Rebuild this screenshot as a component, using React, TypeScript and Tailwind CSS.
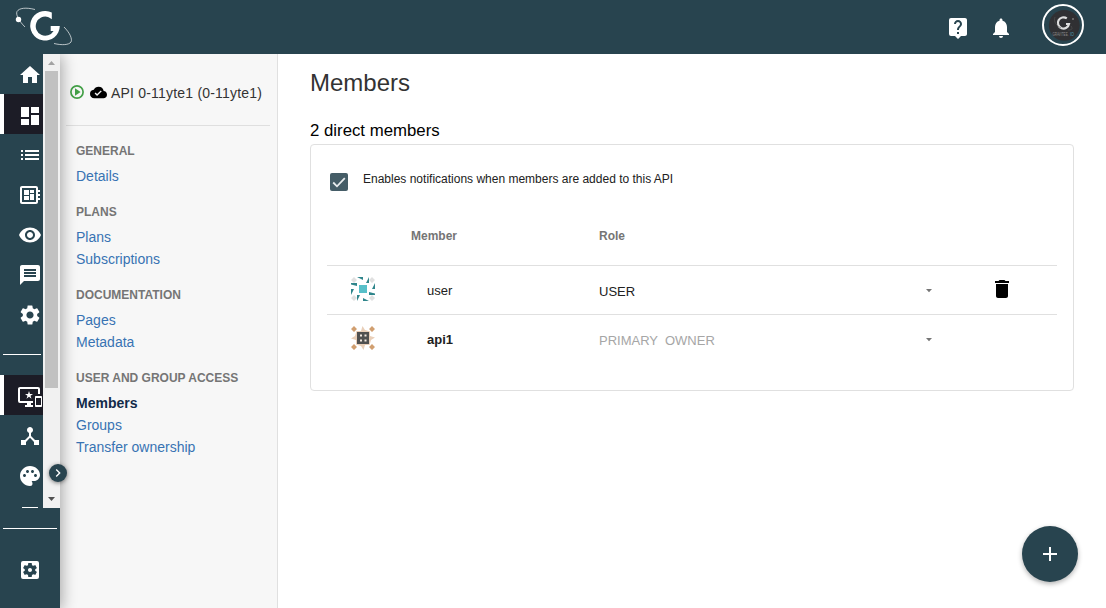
import type { ReactNode } from "react";
import type { IconType } from "react-icons";
import {
  MdAdd,
  MdChevronRight,
  MdCloudDone,
  MdDashboard,
  MdDelete,
  MdDeveloperBoard,
  MdDeviceHub,
  MdHome,
  MdImportantDevices,
  MdList,
  MdLiveHelp,
  MdMessage,
  MdNotifications,
  MdPalette,
  MdSettings,
  MdSettingsApplications,
  MdVisibility,
} from "react-icons/md";

const menu: { title: string; items: string[] }[] = [
  { title: "GENERAL", items: ["Details"] },
  { title: "PLANS", items: ["Plans", "Subscriptions"] },
  { title: "DOCUMENTATION", items: ["Pages", "Metadata"] },
  { title: "USER AND GROUP ACCESS", items: ["Members", "Groups", "Transfer ownership"] },
];

function Logo() {
  return (
    <svg width="58" height="40" viewBox="0 0 58 40" fill="none">
      <path d="M20 2.500C11 .2 4 1 2 4.500c-1.500 3 2 9.500 8 15.500" stroke="#fff" strokeWidth=".8" opacity=".85" />
      <circle cx="3.500" cy="12.500" r="2.700" fill="#fff" />
      <path d="M49 20c6 6 8.500 12 7 15-2 3-9 3.400-17 1.500" stroke="#fff" strokeWidth=".8" opacity=".85" />
      <path
        d="M36.800 5.600A14.800 14.800 0 1 0 44.800 19H35.700v5H38.600A9.600 9.600 0 1 1 33 9.900Q35 10.600 36.800 12.200Z"
        fill="#fff"
      />
    </svg>
  );
}

function Avatar() {
  return (
    <svg width="42" height="42" viewBox="0 0 42 42">
      <circle cx="21" cy="21" r="20" fill="#28444f" stroke="#fff" strokeWidth="2" />
      <circle cx="22.300" cy="21.300" r="15.400" fill="#303033" />
      <path d="M24.800 14.400A5.600 5.600 0 1 0 27 20H24" fill="none" stroke="#ddd" strokeWidth="2.200" />
      <path d="M13 13c-2 5 2 9 6 11M29 22c2 3 1 4-3 4" fill="none" stroke="#555" strokeWidth=".6" />
      <circle cx="31" cy="15" r=".8" fill="#aaa" />
      <g fontFamily="Liberation Sans, sans-serif" fontSize="4.500">
        <text x="10.500" y="31.800" textLength="16" lengthAdjust="spacingAndGlyphs" fill="#8b8b8d">
          GRAVITEE.
        </text>
        <text x="28" y="31.800" textLength="4" lengthAdjust="spacingAndGlyphs" fill="#4e9bb8">
          IO
        </text>
      </g>
    </svg>
  );
}

function PlayBadge() {
  return (
    <svg width="14" height="14" viewBox="0 0 14 14" fill="#43a047">
      <circle cx="7" cy="7" r="6.100" fill="none" stroke="#43a047" strokeWidth="1.700" />
      <path d="M5 3.200v7.600L10.600 7z" />
    </svg>
  );
}

function UserIdenticon() {
  return (
    <svg width="24" height="24" viewBox="0 0 24 24">
      <path fill="#e0e0e0" d="M3 0l3 3-3 3-3-3zM21 0l3 3-3 3-3-3zM3 18l3 3-3 3-3-3zM21 18l3 3-3 3-3-3z" />
      <path
        fill="#2f858b"
        d="M6 0h6v3zM18 0v6h-3zM0 6h6v3L0 7.500zM0 12h3l-3 6zM24 6v6h-3zM18 15l6 1.500V18h-6zM6 18h3l-3 6zM12 21l6 3h-6z"
      />
      <path fill="#58c0c9" d="M8 8h8v8H8z" />
    </svg>
  );
}

function ApiIdenticon() {
  return (
    <svg width="24" height="24" viewBox="0 0 24 24">
      <path
        fill="#e9cfb9"
        d="M11.500 0L14 4l5 1.500V10l5 1.500L20 14l-1.500 5H14l-1.500 5L10 20l-5-1.500V14l-5-1.500L4 10l1.500-5H10z"
      />
      <path fill="#d19f70" d="M3 0l3 3-3 3-3-3zM21 0l3 3-3 3-3-3zM3 18l3 3-3 3-3-3zM21 18l3 3-3 3-3-3z" />
      <path fill="#505050" d="M6 6h12v12H6z" />
      <path fill="#f3e9e0" d="M9 8.500h2v2H9zM13.500 8.500h2v2h-2zM9 13.500h2v2H9zM13.500 13.500h2v2h-2z" />
    </svg>
  );
}

function NavItem({ icon: Icon, active }: { icon: IconType; active?: boolean }) {
  return (
    <div
      className={
        active
          ? "flex h-10 shrink-0 border-l-4 border-white bg-[#1c1c26] pt-[10px] pl-[14px] text-white"
          : "flex h-10 shrink-0 pt-[9px] pl-[18px] text-white"
      }
    >
      <Icon className="size-6 shrink-0" />
    </div>
  );
}

function Caret() {
  return (
    <svg width="6" height="4" viewBox="0 0 6 4" fill="#757575">
      <path d="M0 0h6L3 3.300z" />
    </svg>
  );
}

function Row({
  avatar,
  name,
  role,
  action,
}: {
  avatar: ReactNode;
  name: ReactNode;
  role: ReactNode;
  action?: ReactNode;
}) {
  return (
    <div className="grid h-[49px] grid-cols-[100px_172px_327px_65px_1fr] items-center border-t border-[#e0e0e0] text-[13px]">
      <div className="pb-[2px] pl-6">{avatar}</div>
      <div className="pt-[2px]">{name}</div>
      <div className="pt-[3px] whitespace-pre">{role}</div>
      <div className="pt-[2px]">
        <Caret />
      </div>
      <div className="pb-[2px]">{action}</div>
    </div>
  );
}

export default function App() {
  return (
    <div className="flex h-[608px] w-[1106px] flex-col overflow-hidden bg-white font-['Liberation_Sans',Arial,sans-serif] text-[#212121]">
      <header className="relative z-20 flex h-[54px] shrink-0 items-start justify-between bg-[#28444f] text-white">
        <div className="pt-[7px] pl-[15px]">
          <Logo />
        </div>
        <div className="flex pt-1 pr-[22px]">
          <MdLiveHelp className="mt-3 mr-[19px] size-6" />
          <MdNotifications className="mt-3 mr-[29px] size-6" />
          <Avatar />
        </div>
      </header>

      <div className="flex min-h-0 flex-1">
        <aside className="relative z-10 flex w-[60px] shrink-0 flex-col bg-[#28444f] shadow-[2px_2px_14px_rgba(0,0,0,0.33)]">
          <div className="flex h-[454px] shrink-0">
            <nav className="flex w-[43px] flex-col overflow-hidden">
              <NavItem icon={MdHome} />
              <NavItem icon={MdDashboard} active />
              <NavItem icon={MdList} />
              <NavItem icon={MdDeveloperBoard} />
              <NavItem icon={MdVisibility} />
              <NavItem icon={MdMessage} />
              <NavItem icon={MdSettings} />
              <div className="mt-5 mb-5 ml-[3px] h-px w-[38px] shrink-0 bg-white" />
              <NavItem icon={MdImportantDevices} active />
              <NavItem icon={MdDeviceHub} />
              <NavItem icon={MdPalette} />
              <div className="mt-3 ml-[22px] h-px w-4 shrink-0 bg-white" />
            </nav>
            <div className="flex w-[17px] flex-col items-center justify-between bg-[#f1f1f1]">
              <svg width="17" height="17" viewBox="0 0 17 17" fill="#a3a3a3">
                <path d="M5 11h7L8.500 7z" />
              </svg>
              <div className="mb-auto h-[317px] w-[13px] bg-[#c1c1c1]" />
              <svg width="17" height="17" viewBox="0 0 17 17" fill="#505050">
                <path d="M5 6h7l-3.500 4z" />
              </svg>
            </div>
          </div>
          <div className="mt-5 ml-[3px] h-px w-[54px] bg-white" />
          <MdSettingsApplications className="mt-[29px] ml-[18px] size-6 text-white" />
          <button className="absolute top-[410px] left-[49px] flex size-[18px] items-center justify-center rounded-full bg-[#28444f] text-white shadow-[0_1px_4px_rgba(0,0,0,0.5)]">
            <MdChevronRight className="size-4" />
          </button>
        </aside>

        <section className="w-[218px] shrink-0 border-r border-[#e0e0e0] bg-[#f7f7f7]">
          <div className="mr-[7px] ml-[6px] flex h-[72px] items-center border-b border-[#dfdfdf] pt-[6px] pl-1">
            <span className="mt-[-2px]">
              <PlayBadge />
            </span>
            <MdCloudDone className="ml-[6px] size-[17px] text-black" />
            <span className="ml-[4px] text-sm tracking-[0.2px] whitespace-nowrap text-[#333]">
              API 0-11yte1 (0-11yte1)
            </span>
          </div>
          <div className="flex flex-col gap-[14px] pt-[14px] pl-4">
            {menu.map((group) => (
              <div key={group.title}>
                <h4 className="h-[25px] pt-[3px] text-xs leading-4 font-bold whitespace-nowrap text-[#757575]">
                  {group.title}
                </h4>
                {group.items.map((item) => (
                  <a
                    key={item}
                    className={
                      item === "Members"
                        ? "block h-[22px] text-sm leading-[22px] font-bold text-[#122b4a]"
                        : "block h-[22px] text-sm leading-[22px] text-[#3873b3]"
                    }
                  >
                    {item}
                  </a>
                ))}
              </div>
            ))}
          </div>
        </section>

        <main className="relative min-w-0 flex-1 px-8">
          <h1 className="pt-[13px] text-2xl leading-8 text-[#333]">Members</h1>
          <h2 className="mt-[21px] text-[16.8px] leading-[21px] text-black">2 direct members</h2>
          <div className="mt-[3px] h-[247px] w-[764px] rounded border border-[#e0e0e0] px-4">
            <div className="flex h-[67px] items-start pt-[26px] pl-[3px]">
              <span className="mt-[2px] flex size-[18px] items-center justify-center rounded-[2px] bg-[#455d67]">
                <svg width="18" height="18" viewBox="0 0 18 18" fill="none" stroke="#e8ecee" strokeWidth="1.800">
                  <path d="M3.200 9.500l3.800 3.800L14.800 5.200" />
                </svg>
              </span>
              <span className="ml-[15px] text-xs leading-4">Enables notifications when members are added to this API</span>
            </div>
            <div className="grid h-[53px] grid-cols-[84px_188px_1fr] pt-4 text-xs leading-4 font-bold text-[#757575]">
              <span />
              <span>Member</span>
              <span>Role</span>
            </div>
            <Row
              avatar={<UserIdenticon />}
              name="user"
              role="USER"
              action={<MdDelete className="-ml-px size-6 text-black" />}
            />
            <Row
              avatar={<ApiIdenticon />}
              name={<b>api1</b>}
              role={<span className="text-[#a6a6a6]">{"PRIMARY  OWNER"}</span>}
            />
          </div>
          <button className="absolute right-7 bottom-[26px] flex size-14 items-center justify-center rounded-full bg-[#28444f] text-white shadow-[0_2px_5px_rgba(0,0,0,0.3)]">
            <MdAdd className="size-6" />
          </button>
        </main>
      </div>
    </div>
  );
}
